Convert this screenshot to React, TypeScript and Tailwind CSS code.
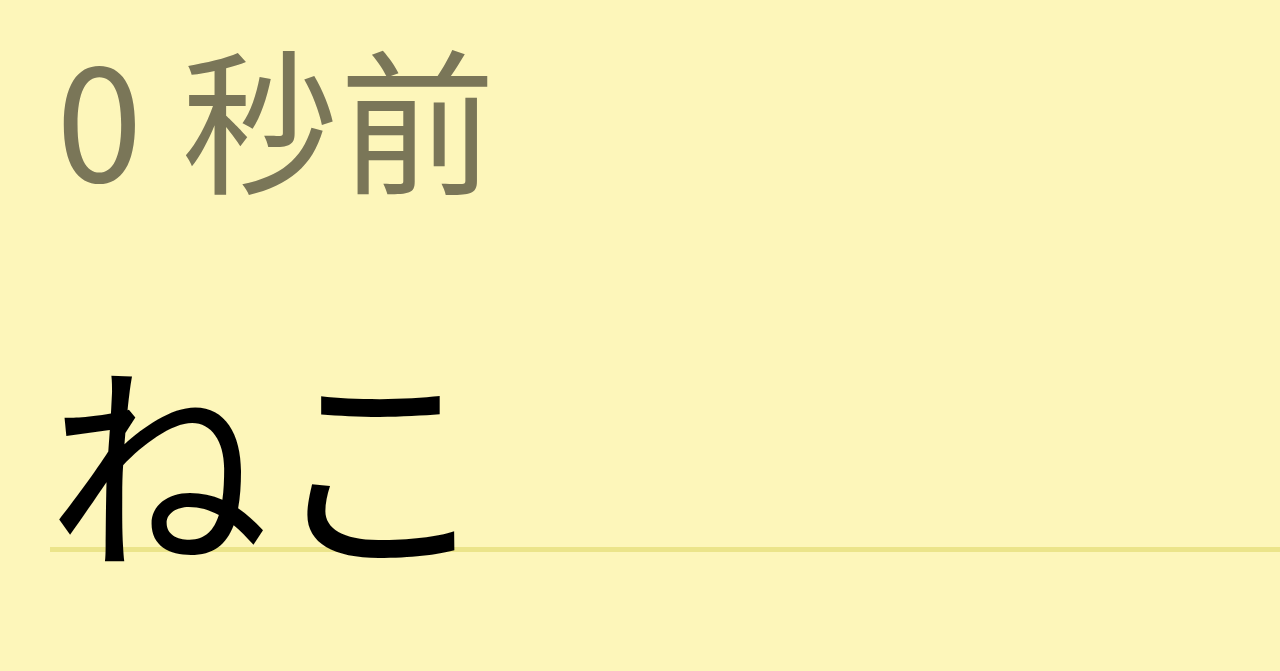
export default function App() {
  return (
    <div className="w-[1280px] h-[671px] overflow-hidden bg-[#fdf6ba] font-['Noto_Sans_CJK_JP','Noto_Sans',sans-serif]">
      <div className="pl-[56px] pt-[36px]">
        <div className="text-[156px] leading-none text-[#7a7658] tracking-[2px]">0 秒前</div>
      </div>
      <div className="ml-[50px] mt-[158px] h-[208px] border-b-[5px] border-[#ebe48a]">
        <div className="-ml-[3px] text-[222px] leading-none text-black -mt-[6px]">ねこ</div>
      </div>
    </div>
  );
}
